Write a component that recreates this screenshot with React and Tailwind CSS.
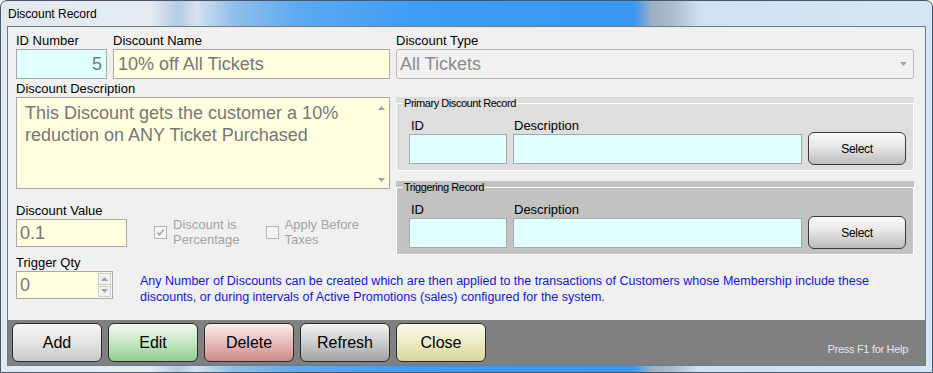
import React from 'react';

/**
 * Field box used for the read-only text fields
 */
const Field = ({ bg = 'bg-[#e0ffff]', className = '', children }) => (
  <div
    className={`flex items-center border border-[#a9a9a9] px-[3px] text-[18px] leading-none text-[#777777] ${bg} ${className}`}
  >
    {children}
  </div>
);

const Label = ({ children, className = '' }) => (
  <div className={`h-[16px] whitespace-nowrap text-[13px] leading-[15px] text-black ${className}`}>
    {children}
  </div>
);

const Triangle = ({ up = false }) => (
  <svg width="7" height="4" viewBox="0 0 7 4">
    <path d={up ? 'M0 4 L3.5 0 L7 4 Z' : 'M0 0 L7 0 L3.5 4 Z'} fill="#a3a3a3" />
  </svg>
);

const Checkbox = ({ checked = false, lines }) => (
  <div className="flex items-start gap-[6px]">
    <div className="mt-[9px] flex h-[13px] w-[13px] items-center justify-center border border-[#b5b5b5] bg-[#f4f4f4]">
      {checked && (
        <svg width="9" height="9" viewBox="0 0 9 9">
          <path d="M1.5 4.5 L3.5 6.8 L7.5 1.8" stroke="#a0a0a0" strokeWidth="1.4" fill="none" />
        </svg>
      )}
    </div>
    <div className="text-[13px] leading-[15px] text-[#a3a3a3]">
      {lines.map((l) => (
        <div key={l}>{l}</div>
      ))}
    </div>
  </div>
);

/**
 * Lookup group box (legend + ID / Description / Select)
 */
const LookupGroup = ({ title, bg }) => (
  <div className={bg}>
    <fieldset className="border border-white">
      <legend className="ml-[6px] px-[1px] text-[11px] leading-[13px] tracking-[-0.45px] text-black">
        {title}
      </legend>
      <div className="flex items-end gap-[6px] pb-[6px] pl-[12px] pr-[7px] pt-[8px]">
        <div className="w-[98px]">
          <Label className="pl-[2px]">ID</Label>
          <Field className="h-[30px]" />
        </div>
        <div className="flex-1">
          <Label className="pl-[1px]">Description</Label>
          <Field className="h-[30px]" />
        </div>
        <button className="mb-[-1px] h-[33px] w-[98px] rounded-[6px] border border-[#3a3a3a] bg-[linear-gradient(180deg,#fbfbfb_0%,#e6e6e6_45%,#cfcfcf_75%,#bcbcbc_100%)] text-[12px] tracking-[-0.3px] text-black">
          Select
        </button>
      </div>
    </fieldset>
  </div>
);

const actions = [
  { label: 'Add', bg: 'bg-[linear-gradient(180deg,#f6f6f6_0%,#e4e4e4_50%,#c9c9c9_100%)]' },
  { label: 'Edit', bg: 'bg-[linear-gradient(180deg,#f2f9f2_0%,#c6e6c6_50%,#8fce8f_100%)]' },
  { label: 'Delete', bg: 'bg-[linear-gradient(180deg,#faeeee_0%,#e8bcbc_50%,#cf8888_100%)]' },
  { label: 'Refresh', bg: 'bg-[linear-gradient(180deg,#f2f2f2_0%,#cdcdcd_50%,#a2a2a2_100%)]' },
  { label: 'Close', bg: 'bg-[linear-gradient(180deg,#fafaee_0%,#ebebc6_50%,#d6d698_100%)]' },
];

const App = () => {
  return (
    <div className="flex h-[373px] w-[933px] flex-col rounded-t-[7px] border border-[#48586a] bg-[linear-gradient(90deg,#e2e9f0_0%,#e6ecf2_16%,#b4cbe1_19%,#d6e2ee_21%,#90bfeb_25%,#5da9f2_32%,#3e9cf5_45%,#3a98f1_68%,#9fb1c3_70%,#abbbca_72%,#cfe0f0_75%,#d6e6f4_100%)] px-[6px] pb-[6px] font-['Liberation_Sans',Arial,sans-serif]">
      {/* title bar */}
      <div className="flex h-[25px] items-center pl-[1px] text-[12px] text-black">Discount Record</div>

      <div className="flex flex-1 flex-col border border-[#6b7b8c] bg-[#f0f0f0]">
        <div className="flex-1 pl-[8px] pt-[6px]">
          <div className="flex gap-[6px]">
            {/* left column */}
            <div className="w-[374px]">
              <div className="flex gap-[6px]">
                <div className="w-[91px]">
                  <Label>ID Number</Label>
                  <Field className="h-[30px] justify-end pr-[4px]">5</Field>
                </div>
                <div className="flex-1">
                  <Label>Discount Name</Label>
                  <Field bg="bg-[#ffffe0]" className="h-[30px] pl-[4px]">10% off All Tickets</Field>
                </div>
              </div>

              <Label className="mt-[2px]">Discount Description</Label>
              <div className="flex h-[92px] border border-[#a9a9a9] bg-[#ffffe0]">
                <div className="flex-1 pl-[8px] pt-[4px] text-[18px] leading-[22px] text-[#777777]">
                  This Discount gets the customer a 10%
                  <br />
                  reduction on ANY Ticket Purchased
                </div>
                <div className="flex w-[16px] flex-col items-center justify-between pb-[6px] pt-[8px]">
                  <Triangle up />
                  <Triangle />
                </div>
              </div>

              <div className="mt-[14px] flex items-end">
                <div className="w-[111px]">
                  <Label>Discount Value</Label>
                  <Field bg="bg-[#ffffe0]" className="h-[28px] pl-[3px]">0.1</Field>
                </div>
                <div className="ml-[27px] flex gap-[26px]">
                  <Checkbox checked lines={['Discount is', 'Percentage']} />
                  <Checkbox lines={['Apply Before', 'Taxes']} />
                </div>
              </div>
            </div>

            {/* right column */}
            <div className="w-[518px]">
              <Label>Discount Type</Label>
              <div className="flex h-[30px] items-center justify-between rounded-[3px] border border-[#bdbdbd] bg-[#f2f2f2] pl-[3px] pr-[6px] text-[18px] text-[#8c8c8c]">
                All Tickets
                <Triangle />
              </div>
              <div className="mt-[18px]">
                <LookupGroup title="Primary Discount Record" bg="bg-[#dedede]" />
              </div>
              <div className="mt-[10px]">
                <LookupGroup title="Triggering Record" bg="bg-[#c2c2c2]" />
              </div>
            </div>
          </div>

          {/* trigger qty + note */}
          <div className="flex items-start">
            <div className="w-[97px]">
              <Label>Trigger Qty</Label>
              <div className="flex h-[28px] items-stretch border border-[#a9a9a9] bg-[#ffffe0]">
                <div className="flex flex-1 items-center pl-[3px] text-[18px] text-[#777777]">0</div>
                <div className="flex w-[15px] flex-col gap-[1px] p-[1px]">
                  <div className="flex flex-1 items-center justify-center border border-[#cdcdcd] bg-[#f2f2f2]">
                    <Triangle up />
                  </div>
                  <div className="flex flex-1 items-center justify-center border border-[#cdcdcd] bg-[#f2f2f2]">
                    <Triangle />
                  </div>
                </div>
              </div>
            </div>
            <div className="ml-[27px] mt-[18px] whitespace-nowrap text-[12.5px] leading-[16px] text-[#1414e6]">
              Any Number of Discounts can be created which are then applied to the transactions of Customers whose Membership include these
              <br />
              discounts, or during intervals of Active Promotions (sales) configured for the system.
            </div>
          </div>
        </div>

        {/* footer */}
        <div className="flex h-[45px] items-start gap-[6px] bg-[#808080] pl-[4px] pr-[17px] pt-[3px]">
          {actions.map((a) => (
            <button
              key={a.label}
              className={`h-[39px] w-[90px] rounded-[6px] border border-[#2c2c2c] ${a.bg} text-[16px] text-black`}
            >
              {a.label}
            </button>
          ))}
          <div className="mb-[9px] ml-auto self-end text-[11px] leading-[13px] tracking-[-0.3px] text-[#e6e6e6]">
            Press F1 for Help
          </div>
        </div>
      </div>
    </div>
  );
};

export default App;
